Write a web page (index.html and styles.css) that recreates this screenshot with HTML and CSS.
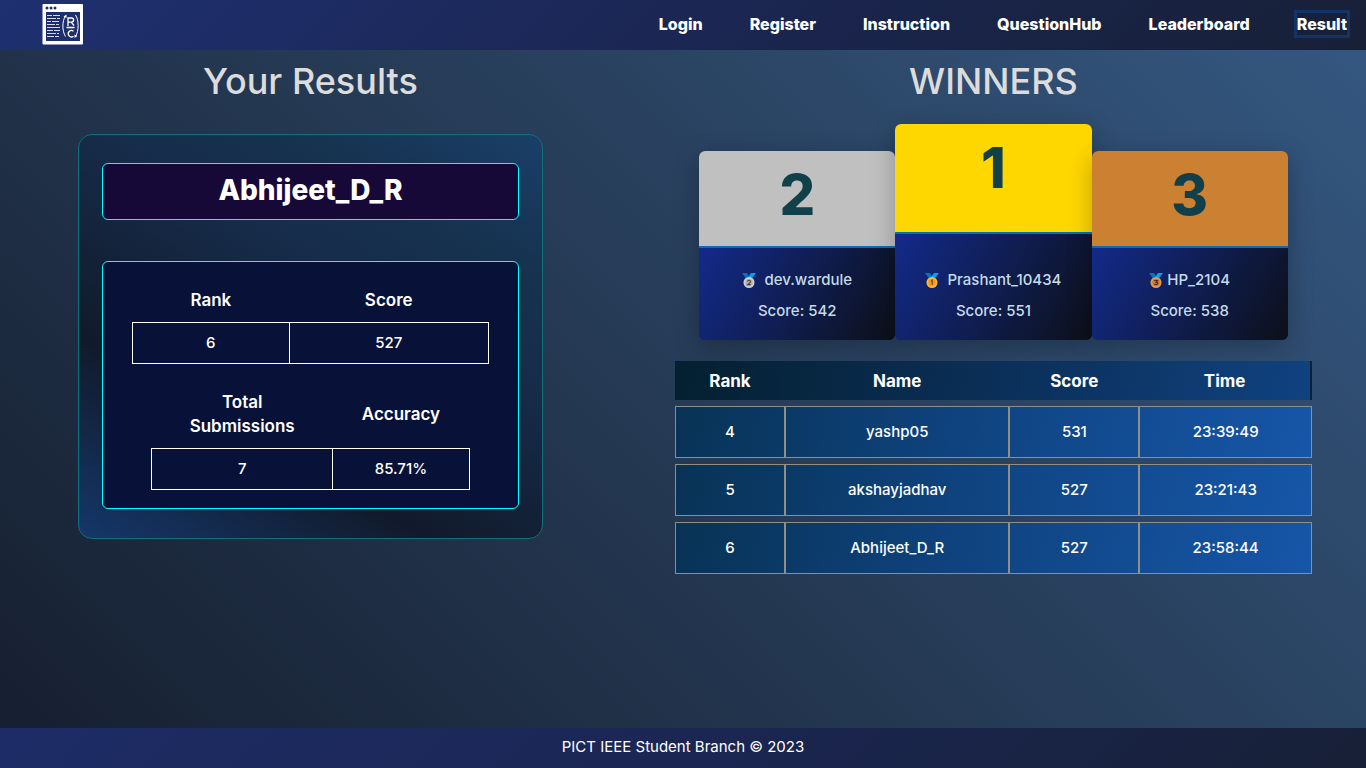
FILE: index.html
```html
<!DOCTYPE html>
<html lang="en">
<head>
<meta charset="utf-8">
<meta name="viewport" content="width=device-width, initial-scale=1">
<title>Result</title>
<link rel="stylesheet" href="styles.css">
</head>
<body>
<header class="navbar">
  <a class="brand" href="#" aria-label="Home">
    <svg width="42" height="42" viewBox="0 0 42 42" aria-hidden="true">
      <rect x="0.500" y="1" width="40.500" height="40.500" rx="1" fill="#fff"/>
      <rect x="4" y="9" width="34" height="29" fill="#1e2e6c"/>
      <g fill="#1e2e6c"><circle cx="5" cy="5" r="1.500"/><circle cx="9" cy="5" r="1.500"/><circle cx="13" cy="5" r="1.500"/></g>
      <path d="M5 12.500h5m1 0h7M5 15.500h9m1 0h3M5 18.500h4m1 0h7M5 21.500h8m1 0h3M5 24.500h13M5 27.500h6m1 0h6M5 30.500h9m1 0h2M5 33.500h7m1 0h4" fill="none" stroke="#d5d9e8" stroke-width="1.200"/>
      <path d="M23.500 13c-3.500 5-3.500 15 0 20.500M33.500 12c3.500 5 3.500 16 0 21.500" fill="none" stroke="#fff" stroke-width="1"/>
      <path d="M24.500 11.500v3.500l-3-1.500zM32.500 35v-3.500l3 1.500z" fill="#fff"/>
      <path d="M26 23v-8h3.500a2 2 0 0 1 0 4.200H26m3.200 0 2.800 3.300M24.500 24.500h8M31.500 28.200a3.200 3.200 0 1 0 0 5" fill="none" stroke="#fff" stroke-width="1.300"/>
    </svg>
  </a>
  <nav class="links">
    <a href="#">Login</a>
    <a href="#">Register</a>
    <a href="#">Instruction</a>
    <a href="#">QuestionHub</a>
    <a href="#">Leaderboard</a>
    <a class="active" href="#" aria-current="page">Result</a>
  </nav>
</header>

<main class="content">
  <section class="results">
    <h1 class="heading">Your Results</h1>
    <div class="result-card">
      <h2 class="user-name">Abhijeet_D_R</h2>
      <div class="stats">
        <table class="stat-table stat-rank">
          <thead><tr><th scope="col">Rank</th><th scope="col">Score</th></tr></thead>
          <tbody><tr><td>6</td><td>527</td></tr></tbody>
        </table>
        <table class="stat-table stat-accuracy">
          <thead><tr><th scope="col">Total Submissions</th><th scope="col">Accuracy</th></tr></thead>
          <tbody><tr><td>7</td><td>85.71%</td></tr></tbody>
        </table>
      </div>
    </div>
  </section>

  <section class="winners">
    <h1 class="heading">WINNERS</h1>
    <div class="podium">
      <article class="place silver">
        <div class="place-number">2</div>
        <div class="place-info">
          <p class="winner"><svg class="medal" viewBox="0 0 14 15" aria-hidden="true"><path d="M0 0h5l3 5-3 2z" fill="#0074bd"/><path d="M14 0H9L5.500 5l3 2z" fill="#03a4ef"/><circle cx="7" cy="9.500" r="5.500" fill="#d0d0d0"/><circle cx="7" cy="9.500" r="3.700" fill="#b4b0ae"/><path d="M5.500 8.500q0-1.300 1.500-1.300t1.500 1.200q0 .8-3 3.200h3.200" fill="none" stroke="#4b4545" stroke-width="1.100"/></svg><span>dev.wardule</span></p>
          <p>Score: 542</p>
        </div>
      </article>
      <article class="place gold">
        <div class="place-number">1</div>
        <div class="place-info">
          <p class="winner"><svg class="medal" viewBox="0 0 14 15" aria-hidden="true"><path d="M0 0h5l3 5-3 2z" fill="#0074bd"/><path d="M14 0H9L5.500 5l3 2z" fill="#03a4ef"/><circle cx="7" cy="9.500" r="5.500" fill="#ffb92e"/><circle cx="7" cy="9.500" r="3.700" fill="#f19b22"/><path d="M6 8l1.200-.8v4.600" fill="none" stroke="#6b4a2a" stroke-width="1.200"/></svg><span>Prashant_10434</span></p>
          <p>Score: 551</p>
        </div>
      </article>
      <article class="place bronze">
        <div class="place-number">3</div>
        <div class="place-info">
          <p class="winner"><svg class="medal" viewBox="0 0 14 15" aria-hidden="true"><path d="M0 0h5l3 5-3 2z" fill="#0074bd"/><path d="M14 0H9L5.500 5l3 2z" fill="#03a4ef"/><circle cx="7" cy="9.500" r="5.500" fill="#e9964a"/><circle cx="7" cy="9.500" r="3.700" fill="#c97838"/><path d="M5.300 7.500h3.200L7 9.200q1.800 0 1.700 1.300T5.200 11.300" fill="none" stroke="#4a2c20" stroke-width="1.100"/></svg><span>HP_2104</span></p>
          <p>Score: 538</p>
        </div>
      </article>
    </div>
    <table class="ranking">
      <colgroup><col class="col-rank"><col class="col-name"><col class="col-score"><col class="col-time"></colgroup>
      <thead><tr><th scope="col">Rank</th><th scope="col">Name</th><th scope="col">Score</th><th scope="col">Time</th></tr></thead>
      <tbody>
        <tr><td>4</td><td>yashp05</td><td>531</td><td>23:39:49</td></tr>
        <tr><td>5</td><td>akshayjadhav</td><td>527</td><td>23:21:43</td></tr>
        <tr><td>6</td><td>Abhijeet_D_R</td><td>527</td><td>23:58:44</td></tr>
      </tbody>
    </table>
  </section>
</main>

<footer class="footer">PICT IEEE Student Branch © 2023</footer>
</body>
</html>
```

FILE: styles.css
```css
* {
  box-sizing: border-box;
  margin: 0;
}

body {
  display: flex;
  flex-direction: column;
  min-height: 100vh;
  font-family: Inter, "Open Sans", sans-serif;
  font-size: 15px;
  line-height: 24px;
  color: #fff;
  background: #25384f;
}

.navbar {
  display: flex;
  align-items: center;
  justify-content: space-between;
  height: 50px;
  padding: 0 19px 2px 42px;
  background: linear-gradient(135deg, #1e3070, #1b2653 50%, #172036);
}

.brand {
  display: flex;
}

.links {
  display: flex;
  gap: 47px;
}

.links a {
  font-size: 16px;
  line-height: 22px;
  font-weight: 800;
  color: #fff;
  text-decoration: none;
}

.links .active {
  outline: 3px solid #123367;
}

.content {
  flex: 1;
  display: grid;
  grid-template-columns: 5fr 6fr;
  align-items: start;
  background: linear-gradient(45deg, #161f30, #263b56 50%, #345780);
}

.results,
.winners {
  display: flex;
  flex-direction: column;
  align-items: center;
}

.heading {
  padding-top: 4px;
  font-size: 36px;
  line-height: 54px;
  font-weight: 500;
  color: #dcdcdc;
}

.result-card {
  display: flex;
  flex-direction: column;
  gap: 41px;
  width: 75%;
  margin-top: 26px;
  padding: 28px 23px 29px;
  border: 1px solid #0b7377;
  border-radius: 14px;
  background: linear-gradient(30deg, #15376a, #111a2b 30%, #162c4a 62%, #16324f 78%, #1a3f68);
}

.user-name {
  padding: 7px 8px 9px;
  border: 1px solid #00ffff;
  border-radius: 6px;
  font-size: 28px;
  line-height: 39px;
  font-weight: 800;
  text-align: center;
  background: #160938;
}

.stats {
  display: flex;
  flex-direction: column;
  align-items: center;
  gap: 20px;
  padding: 20px 16px 18px;
  border: 1px solid #00ffff;
  border-radius: 6px;
  background: #081138;
}

.stat-table {
  table-layout: fixed;
  border-collapse: collapse;
  text-align: center;
}

.stat-table th {
  padding: 6px 20px 10px;
  font-size: 17px;
  line-height: 24px;
  font-weight: 600;
}

.stat-table td {
  height: 41px;
  padding: 0;
  border: 1px solid #fff;
  font-size: 15px;
  font-weight: 500;
}

.stat-rank {
  width: 93%;
}

.stat-rank th:first-child {
  width: 44%;
}

.stat-accuracy {
  width: 83%;
}

.stat-accuracy th:first-child {
  width: 57%;
}

.podium {
  display: flex;
  align-items: flex-end;
  width: 79%;
  margin-top: 16px;
}

.place {
  flex: 1;
  border-radius: 6px;
  overflow: hidden;
  background: #0f1a4a;
  box-shadow: 0 6px 24px rgba(0, 0, 0, 0.25);
}

.place-number {
  height: 95px;
  padding-top: 2px;
  font-size: 56px;
  line-height: 84px;
  font-weight: 800;
  text-align: center;
  color: #11404a;
  background: #c0c0c0;
}

.gold .place-number {
  height: 108px;
  background: #ffd700;
}

.bronze .place-number {
  background: #cb8032;
}

.place-info {
  padding: 20px 0 17px;
  border-top: 2px solid #006fc0;
  text-align: center;
  font-weight: 500;
  color: #c4dbe8;
  background: linear-gradient(120deg, #132a8a, #0c1018);
}

.gold .place-info {
  padding-top: 34px;
}

.place-info p + p {
  margin-top: 7px;
}

.winner {
  display: flex;
  align-items: center;
  justify-content: center;
  gap: 8px;
}

.bronze .winner {
  gap: 4px;
}

.medal {
  width: 14px;
  height: 15px;
}

.ranking {
  width: 85.5%;
  margin-top: 15px;
  table-layout: fixed;
  border-collapse: separate;
  border-spacing: 0 6px;
  text-align: center;
}

.col-rank {
  width: 17.3%;
}

.col-name {
  width: 35.2%;
}

.col-score {
  width: 20.4%;
}

.col-time {
  width: 27.1%;
}

.ranking thead tr {
  background: linear-gradient(100deg, #042030, #0a2d54 45%, #104280);
}

.ranking tbody tr {
  background: linear-gradient(100deg, #083356, #0f437f 45%, #1656a8);
}

.ranking th {
  height: 39px;
  padding: 0;
  font-size: 17px;
  font-weight: 700;
}

.ranking th:last-child {
  border-right: 2px solid #06223a;
}

.ranking td {
  height: 52px;
  padding: 0;
  border: 1px solid #8f8f86;
  font-weight: 500;
}

.footer {
  padding: 7px 0 9px;
  text-align: center;
  background: linear-gradient(135deg, #1d2c66, #1b2653 50%, #172036);
}
```
